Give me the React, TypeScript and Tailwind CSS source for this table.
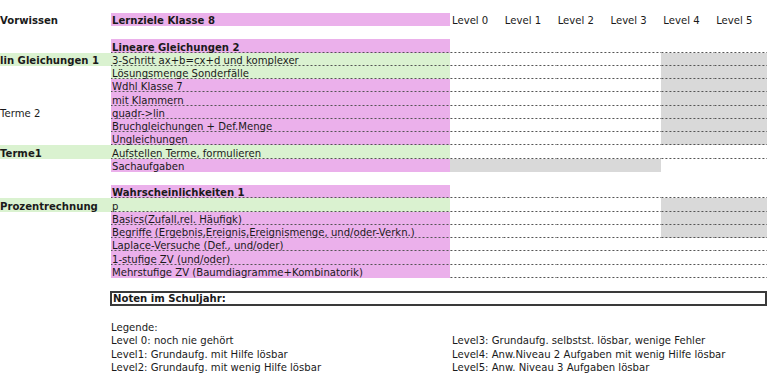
import React from "react";

type Row = {
  label?: string;
  labelBold?: boolean;
  labelGreen?: boolean;
  text?: string;
  bold?: boolean;
  cell?: "pink" | "green" | "none";
  gray?: number[];
  dash?: "all" | "levels" | "none";
};

const DASH =
  "bg-[image:linear-gradient(to_right,#555_50%,transparent_50%)] bg-[length:4px_1px] bg-repeat-x bg-bottom";

const G45 = [4, 5];

const rows: Row[] = [
  { label: "Vorwissen", labelBold: true, text: "Lernziele Klasse 8", bold: true, cell: "pink", dash: "none" },
  { cell: "none", dash: "none" },
  { text: "Lineare Gleichungen 2", bold: true, cell: "pink", dash: "all" },
  { label: "lin Gleichungen 1", labelBold: true, labelGreen: true, text: "3-Schritt ax+b=cx+d und komplexer", cell: "green", gray: G45, dash: "all" },
  { text: "Lösungsmenge Sonderfälle", cell: "green", gray: G45, dash: "all" },
  { text: "Wdhl Klasse 7", cell: "pink", gray: G45, dash: "all" },
  { text: "mit Klammern", cell: "pink", gray: G45, dash: "all" },
  { label: "Terme 2", text: "quadr->lin", cell: "pink", gray: G45, dash: "all" },
  { text: "Bruchgleichungen + Def.Menge", cell: "pink", gray: G45, dash: "all" },
  { text: "Ungleichungen", cell: "pink", gray: G45, dash: "all" },
  { label: "Terme1", labelBold: true, labelGreen: true, text: "Aufstellen Terme, formulieren", cell: "green", dash: "all" },
  { text: "Sachaufgaben", cell: "pink", gray: [0, 1, 2, 3], dash: "none" },
  { cell: "none", dash: "none" },
  { text: "Wahrscheinlichkeiten 1", bold: true, cell: "pink", dash: "all" },
  { label: "Prozentrechnung", labelBold: true, labelGreen: true, text: "p", cell: "green", gray: G45, dash: "all" },
  { text: "Basics(Zufall,rel. Häufigk)", cell: "pink", gray: G45, dash: "all" },
  { text: "Begriffe (Ergebnis,Ereignis,Ereignismenge, und/oder-Verkn.)", cell: "pink", gray: G45, dash: "all" },
  { text: "Laplace-Versuche (Def., und/oder)", cell: "pink", dash: "all" },
  { text: "1-stufige ZV (und/oder)", cell: "pink", dash: "all" },
  { text: "Mehrstufige ZV (Baumdiagramme+Kombinatorik)", cell: "pink", dash: "levels" },
];

function cellBg(c?: string) {
  if (c === "pink") return "bg-[#ebb0eb]";
  if (c === "green") return "bg-[#daf2d0]";
  return "";
}

function SheetRow({ r, header }: { r: Row; header: boolean }) {
  const dashAll = r.dash === "all";
  const dashLevels = r.dash === "all" || r.dash === "levels";
  return (
    <div className="flex h-[13.25px]">
      <div
        className={`w-[111px] shrink-0 flex items-end leading-[10px] whitespace-nowrap ${
          r.labelGreen ? "bg-[#daf2d0]" : ""
        } ${r.labelBold ? "font-bold" : ""}`}
      >
        {r.label ?? ""}
      </div>
      <div
        className={`w-[339px] shrink-0 flex items-end pl-[1px] leading-[10px] whitespace-nowrap ${cellBg(
          r.cell
        )} ${r.bold ? "font-bold" : ""} ${dashAll ? DASH : ""}`}
      >
        {r.text ?? ""}
      </div>
      <div className="w-[317px] shrink-0 grid grid-cols-6">
        {[0, 1, 2, 3, 4, 5].map((i) => (
          <div
            key={i}
            className={`flex items-end pl-[2px] leading-[10px] whitespace-nowrap ${
              r.gray?.includes(i) ? "bg-[#d9d9d9]" : ""
            } ${dashLevels ? DASH : ""}`}
          >
            {header ? `Level ${i}` : ""}
          </div>
        ))}
      </div>
    </div>
  );
}

export default function App() {
  return (
    <div
      className="w-[768px] h-[385px] overflow-hidden bg-white text-[10.1px] text-[#1a1a1a] pt-[12.75px]"
      style={{ fontFamily: '"DejaVu Sans", Verdana, sans-serif' }}
    >
      {rows.map((r, i) => (
        <SheetRow key={i} r={r} header={i === 0} />
      ))}
      <div className="h-[13.25px]" />
      <div className="ml-[110px] w-[657px] h-[15px] border-2 border-[#3a3a3a] flex items-center pl-[1px] font-bold leading-[11px]">
        Noten im Schuljahr:
      </div>
      <div className="mt-[15px] pl-[111px] flex leading-[13.25px]">
        <div className="w-[341px] shrink-0">
          <div>Legende:</div>
          <div>Level 0: noch nie gehört</div>
          <div>Level1: Grundaufg. mit Hilfe lösbar</div>
          <div>Level2: Grundaufg. mit wenig Hilfe lösbar</div>
        </div>
        <div>
          <div>&nbsp;</div>
          <div>Level3: Grundaufg. selbstst. lösbar, wenige Fehler</div>
          <div>Level4: Anw.Niveau 2 Aufgaben mit wenig Hilfe lösbar</div>
          <div>Level5: Anw. Niveau 3 Aufgaben lösbar</div>
        </div>
      </div>
    </div>
  );
}
